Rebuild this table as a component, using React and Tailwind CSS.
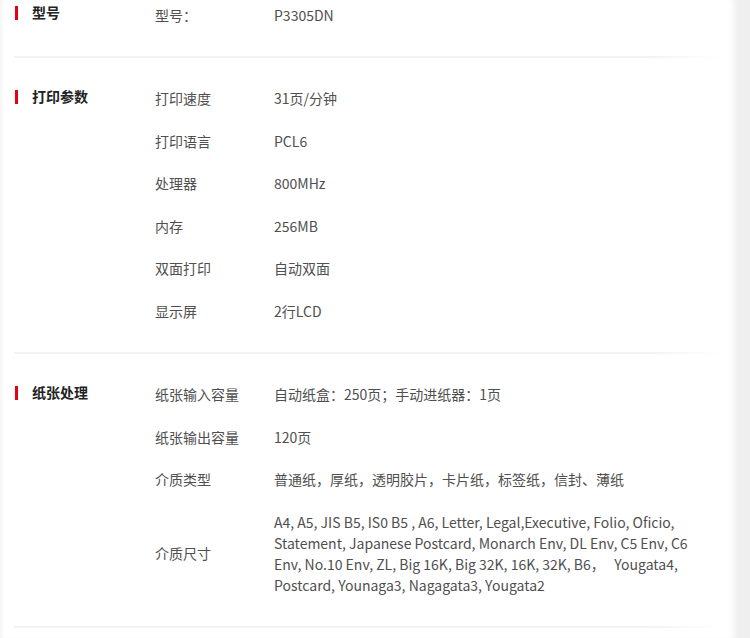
import React from "react";

const sections = [
  {
    title: "型号",
    rows: [{ label: "型号：", value: "P3305DN" }],
  },
  {
    title: "打印参数",
    rows: [
      { label: "打印速度", value: "31页/分钟" },
      { label: "打印语言", value: "PCL6" },
      { label: "处理器", value: "800MHz" },
      { label: "内存", value: "256MB" },
      { label: "双面打印", value: "自动双面" },
      { label: "显示屏", value: "2行LCD" },
    ],
  },
  {
    title: "纸张处理",
    rows: [
      { label: "纸张输入容量", value: "自动纸盒：250页；手动进纸器：1页" },
      { label: "纸张输出容量", value: "120页" },
      { label: "介质类型", value: "普通纸，厚纸，透明胶片，卡片纸，标签纸，信封、薄纸" },
      {
        label: "介质尺寸",
        value:
          "A4, A5, JIS B5, IS0 B5 , A6, Letter, Legal,Executive, Folio, Oficio, Statement, Japanese Postcard, Monarch Env, DL Env, C5 Env, C6 Env, No.10 Env, ZL, Big 16K, Big 32K, 16K, 32K, B6，\u00a0\u00a0 Yougata4, Postcard, Younaga3, Nagagata3, Yougata2",
      },
    ],
  },
];

const Section = ({ title, rows }) => (
  <div>
    <div className="flex pt-[20px] pb-[19px]">
      {/* section title */}
      <div className="w-[155px] shrink-0 pt-[8px] flex items-start">
        <span className="ml-[15px] mt-[4px] w-[3px] h-[14px] bg-[#e60012]" />
        <span className="ml-[14px] text-[14px] leading-[21px] font-bold text-[#222]">{title}</span>
      </div>
      {/* rows */}
      <div className="flex flex-col">
        {rows.map((r) => (
          <div key={r.label} className="flex items-center min-h-[42.5px] py-[10.75px] text-[14px] leading-[21px] text-[#4f4f4f]">
            <div className="w-[119px] shrink-0">{r.label}</div>
            <div className="w-[420px]">{r.value}</div>
          </div>
        ))}
      </div>
    </div>
    <div className="ml-[14px] mr-[4px] h-[2px] bg-gradient-to-r from-[#f3f3f3] via-[#f3f3f3] via-90% to-white" />
  </div>
);

export default function App() {
  return (
    <div className="flex w-[750px] h-[638px] overflow-hidden bg-[#efefef] font-['Noto_Sans_CJK_SC','Noto_Sans',sans-serif]">
      <div className="w-[727px] shrink-0 bg-white shadow-[inset_4px_0_4px_-2px_#f4f4f4,4px_0_6px_3px_white]">
        <div className="-mt-[26px]">
          {sections.map((s) => (
            <Section key={s.title} {...s} />
          ))}
        </div>
      </div>
    </div>
  );
}
